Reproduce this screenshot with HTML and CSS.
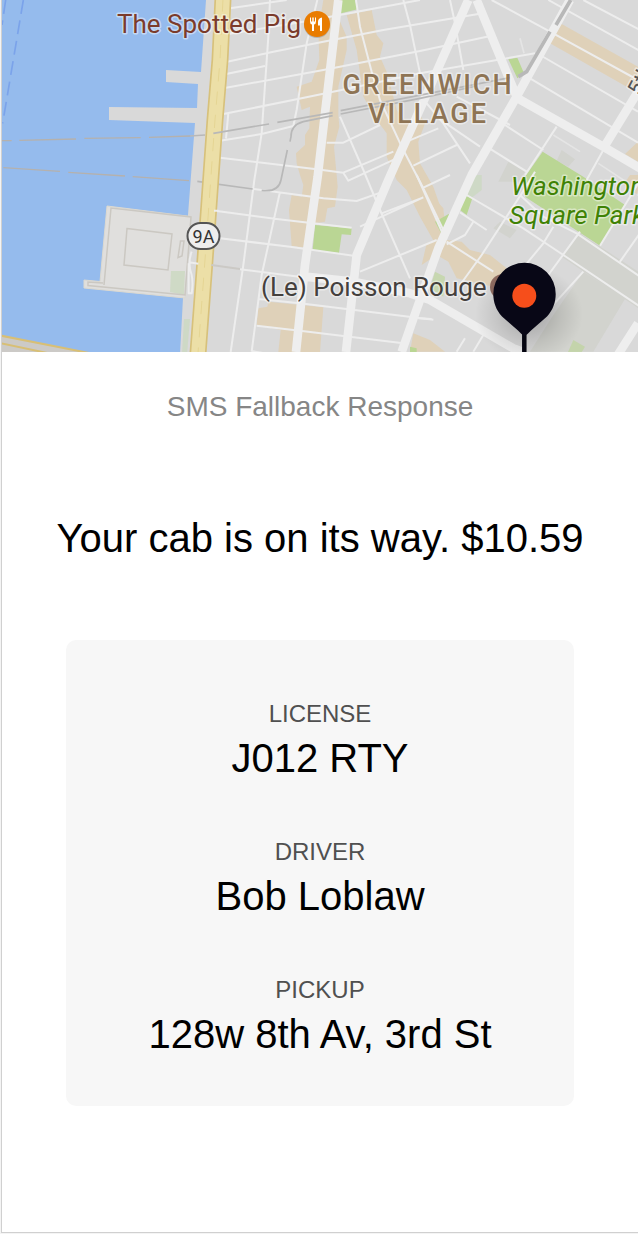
FILE: index.html
```html
<!DOCTYPE html>
<html lang="en">
<head>
<meta charset="utf-8">
<meta name="viewport" content="width=device-width, initial-scale=1">
<title>SMS Fallback Response</title>
<link rel="stylesheet" href="styles.css">
</head>
<body>
<main class="screen">
  <svg class="map" viewBox="2 0 636 352" role="img" aria-label="Map of Greenwich Village with the pickup point">
    <defs>
      <radialGradient id="shade"><stop offset="0.2" stop-color="#000" stop-opacity=".2"/><stop offset="0.6" stop-color="#000" stop-opacity=".09"/><stop offset="1" stop-color="#000" stop-opacity="0"/></radialGradient>
    </defs>
    <rect class="land" x="0" y="0" width="640" height="354"/>
    <!-- river and piers -->
    <path class="water" d="M0 0H206L201 72 166 70V82L198 84 197 108 109 107V120L195 123 188 215 183 298 180 354H0Z"/>
    <path class="shore" d="M0 335L94 354H0Z"/>
    <path class="gold-line" d="M0 335.500L94 354M0 343L52 354"/>
    <path class="pier" d="M107 206L191 216.500 185 298 84 288V280L100 281.500Z"/>
    <path class="grass-soft" d="M171 271H185L184 295 170 292Z"/>
    <path class="pier-line" d="M104 285L111 208 191 217 185 295 88 285.500V282L103 283M127 228.500L172 234 168 270 124 265ZM180.500 241H184L182 256 178 257.500Z"/>
    <path class="grass-soft" d="M184 319H190L187 354H182Z"/>

    <g transform="scale(.333333)">
      <g transform="translate(570 0)">
        <path class="shops" d="M400 0H455L448 60 470 110V150L445 260V345L448 380 432 440 440 525 443 560 435 620 412 625 405 665 372 670 362 745 305 738 297 630 305 585 335 590 340 555 330 525 320 490 318 460 345 435 345 405 358 385 360 320 335 330 320 260 365 245 388 180 385 90Z"/>
        <path class="shops" d="M470 45L545 30 560 105 580 130 570 170 592 220 620 330 650 370 690 345 705 370 685 425 690 490 730 560 765 660 735 730 690 650 650 570 620 540 590 470 590 400 560 360 520 290 500 150Z"/>
        <path class="shops" d="M235 905L400 922 390 1056H265L272 990 200 975 205 925 232 920Z"/>
        <path class="grass" d="M455 0H495L503 28 453 40ZM375 675L485 685 483 705 455 703 447 759 368 750Z"/>
      </g>
      <g transform="translate(1230 0)">
        <path class="shops" d="M455 72L684 200V270L650 260 420 130ZM700 410L645 462 684 485ZM700 510L665 540H700Z"/>
        <path class="campus" d="M295 485L345 515 325 545H265ZM455 450L495 478 475 500 440 482Z"/>
        <path class="grass" d="M295 178L322 173 342 220 322 235ZM398 455L345 530V590L570 737 645 615 520 530Z"/>
      </g>
      <g transform="translate(1230 525)">
        <path class="campus" d="M510 175L700 300V410L455 245ZM520 290L645 372 550 530H360L430 420ZM270 140L320 165 300 190 250 160Z"/>
        <path class="shops" d="M20 0L65 60 100 100 110 195 155 200 180 225 240 240 290 280 250 335 140 310 115 260 80 240 35 270 50 205 75 195 60 130 20 60ZM10 475L60 495 105 530H0ZM660 0H700V70L640 30Z"/>
        <path class="grass" d="M165 62L187 70 170 120 150 105ZM75 140L120 115 95 178ZM0 515L20 520V535H0Z"/>
        <path class="grass faded" d="M75 290L105 305 100 365 60 340ZM490 495L525 515 510 540H470Z"/>
        <path class="grass-soft" d="M195 0H215V45L185 68 165 50Z"/>
      </g>

      <!-- streets -->
      <g class="street">
        <path transform="translate(570 0)" d="M120 25L290 0M110 103L340 65 690 0M105 187L250 155 400 125 580 90 865 42M105 223L225 198M100 265L400 210 690 153 905 107M100 342L320 298 480 265 690 220 1035 160M90 422L215 402 310 378M115 340L108 415M90 473L380 508 460 518 475 542 620 475M460 518L610 455M240 0L235 110 215 400 193 540 160 795 122 1056M382 0L350 130 320 330 310 378"/>
        <path transform="translate(570 525)" d="M190 42L400 70 500 78 580 50M75 107L260 132 485 158M90 190L300 215 490 242M150 283L350 308M205 372L330 385 730 434M200 452L330 467 640 505M270 50L215 300 185 530M185 528L230 536"/>
        <!-- blocks between the two diagonal avenues -->
        <path transform="translate(840 0)" d="M228 0L240 80 275 215 300 300 365 440 430 565 495 700M370 0L390 75 420 220M140 428H190L300 375M180 350L250 510 300 630 390 835M380 425L475 385M400 497L530 435M430 563L510 525M305 640L430 592M240 680L430 592M240 815L470 720M440 310L490 370 570 490M490 365L600 440M530 290L690 375"/>
        <path transform="translate(1230 0)" d="M120 0L135 70 160 210M245 0L420 95 684 240M415 0L690 153M520 0L700 95M395 168L684 335M360 235L684 428M285 375L400 450M230 440L350 515M440 380L345 525M580 450L530 540"/>
        <path class="lane" transform="translate(1230 0)" d="M330 115L342 160M430 405L510 455M565 490L640 540"/>
        <path transform="translate(1230 525)" d="M170 60L340 160 460 240 690 395M330 60L400 125 500 175 690 305M110 200L250 290M150 330L215 240 345 40 375 -10M330 290L400 205 430 155M415 300L510 170M420 400L520 290M570 212L645 90 700 0M630 260L700 160M20 0L100 180M110 208L165 180 190 140M150 112L230 165M25 430L65 432M140 530L165 490M190 530L220 480"/>
      </g>
      <path class="avenue" d="M1015 0L975 340 953 530 915 795 888 1056M1405 0L1290 260 1165 540 1070 765 1038 1056M1430 0L1550 290M1710 0L1550 290 1415 525 1315 745 1235 970 1205 1056M1550 293L1810 440 1920 505M1920 265L1810 445M915 830L1060 845 1230 880 1290 900 1540 1045 1570 1056M1914 970L1850 1070"/>

      <!-- rail lines -->
      <g class="rail">
        <path transform="translate(570 0)" d="M0 408L45 405M262 367L428 338M428 347L340 365Q303 375 303 410M303 410L300 425M292 450L273 540Q265 578 215 571M452 332L960 233M452 342L690 295 860 258"/>
        <path d="M592 544L758 567"/>
        <path class="rail-wide" transform="translate(1230 0)" d="M325 230L350 215 420 95M438 75L482 0"/>
      </g>
      <path class="tunnel" d="M6 422H35M58 421L228 417M253 415L422 413M447 412L570 408M10 503L180 514M205 517L375 528M398 530L567 542"/>
      <path class="ferry" d="M70 0L8 370M17 0L6 75"/>

      <!-- West Side Highway -->
      <path class="highway-edge" d="M669 -5L660 180 645 360 633 528 615 780 594 1060"/>
      <path class="highway" d="M669 -5L660 180 645 360 633 528 615 780 594 1060"/>
      <path class="highway-mid" d="M669 -5L660 180 645 360 633 528 615 780 594 1060"/>
      <path class="rail" d="M640 400L807 372"/>
      <path class="street" d="M575 755Q562 790 575 825 580 850 575 880H566V790M567 787L595 791M642 632H656"/>
      <path class="tunnel-grey" d="M634 795L720 807"/>
    </g>

    <!-- route shield -->
    <rect class="shield" x="187.500" y="223" width="32" height="26" rx="13"/>
    <text class="shield-text" x="203.500" y="243">9A</text>

    <!-- place names -->
    <text class="label food" x="117" y="33">The Spotted Pig</text>
    <circle class="food-shadow" cx="317" cy="25" r="13"/>
    <circle class="food-dot" cx="317" cy="24" r="13"/>
    <path class="cutlery" d="M310 17.500V21.500Q310 24 312 24.500V31H314V24.500Q316 24 316 21.500V17.500H315V21.500H313.700V17.500H312.300V21.500H311V17.500ZM322 17.500Q318 18 318 22V25.500H320V31H322Z"/>
    <g class="label district">
      <text x="428" y="94">GREENWICH</text>
      <text x="428" y="123">VILLAGE</text>
    </g>
    <g class="label park">
      <text x="511" y="195">Washington</text>
      <text x="509" y="224">Square Park</text>
    </g>
    <text class="label road-name" transform="translate(640 97) rotate(-62)">5th</text>
    <circle class="venue-dot" cx="503" cy="287" r="13"/>
    <text class="label venue" x="261" y="296">(Le) Poisson Rouge</text>

    <!-- pickup pin -->
    <ellipse cx="529" cy="314" rx="54" ry="48" fill="url(#shade)"/>
    <path class="pin-stem" d="M524.300 330V354"/>
    <path class="pin" d="M524.500 336Q521 334 518 330.500L502 316.500C496 310 493.300 302 493.300 294A31.200 31.200 0 0 1 555.700 294C555.700 302 553 310 547 316.500L531 330.500Q528 334 524.500 336Z"/>
    <circle class="pin-dot" cx="524.300" cy="295.700" r="12"/>
  </svg>

  <section class="message">
    <h1 class="title">SMS Fallback Response</h1>
    <p class="status">Your cab is on its way. $10.59</p>
    <dl class="card">
      <div class="field"><dt>LICENSE</dt><dd>J012 RTY</dd></div>
      <div class="field"><dt>DRIVER</dt><dd>Bob Loblaw</dd></div>
      <div class="field"><dt>PICKUP</dt><dd>128w 8th Av, 3rd St</dd></div>
    </dl>
  </section>
</main>
</body>
</html>
```
FILE: styles.css
```css
* { box-sizing: border-box; }

body {
  margin: 0;
  border-left: 1px solid #f4f4f4;
  border-bottom: 1px solid #f4f4f4;
  background: #fff;
  color: #000;
  font-family: "Liberation Sans", Arial, sans-serif;
}

.screen {
  border-left: 1px solid #d0d0d0;
  border-bottom: 1px solid #d0d0d0;
}

.map { display: block; width: 100%; height: auto; }

.message {
  padding: 39px 64px 126px;
  text-align: center;
}

.title {
  margin: 0 0 91px;
  font-size: 28px;
  line-height: 32px;
  font-weight: 400;
  color: #868686;
}

.status {
  margin: 0 -32px 78px;
  font-size: 40px;
  line-height: 48px;
}

.card {
  display: flex;
  flex-direction: column;
  gap: 56px;
  margin: 0;
  padding: 60px 16px 48px;
  border-radius: 10px;
  background: #f7f7f7;
}

.field dt {
  margin-bottom: 6px;
  font-size: 24px;
  line-height: 28px;
  color: #505050;
}

.field dd {
  margin: 0;
  font-size: 40px;
  line-height: 48px;
}

/* map areas */
.land { fill: #d9d9d9; }
.water { fill: #95bbed; }
.shore { fill: #cccac7; }
.pier { fill: #e0dfdd; stroke: #dcd9d0; }
.pier-line { fill: none; stroke: #cbc8c2; stroke-width: 1.5; }
.shops { fill: #dfd1b9; }
.campus { fill: #d2d3ce; }
.grass { fill: #bad694; }
.faded { opacity: .6; }
.grass-soft { fill: #cbd8c1; opacity: .8; }

/* map lines, drawn at three units to the pixel */
.street { fill: none; stroke: #ededed; stroke-width: 6; stroke-linejoin: round; }
.lane { stroke-width: 5; stroke: #e5e5e5; }
.avenue { fill: none; stroke: #eee; stroke-width: 26; stroke-linejoin: round; }
.rail { fill: none; stroke: #b8b8b8; stroke-width: 5; }
.rail-wide { stroke-width: 11; }
.tunnel { fill: none; stroke: #b5b1ad; stroke-width: 4; }
.tunnel-grey { fill: none; stroke: #cbc9c5; stroke-width: 6; }
.ferry { fill: none; stroke: #7ba3ea; stroke-width: 5; stroke-dasharray: 42 20; }
.highway-edge { fill: none; stroke: #d7c17b; stroke-width: 51; }
.highway { fill: none; stroke: #ecdfa7; stroke-width: 41; }
.highway-mid { fill: none; stroke: #e5d594; stroke-width: 3; stroke-dasharray: 40 30; }
.gold-line { fill: none; stroke: #d8bf75; stroke-width: 2; }

/* map labels */
.label {
  font-family: Roboto, sans-serif;
  font-size: 26px;
  stroke: #fff;
  stroke-opacity: .45;
  stroke-width: 3px;
  stroke-linejoin: round;
  paint-order: stroke;
}
.food { fill: #7b3b2b; }
.food-shadow { fill: #999; opacity: .6; }
.food-dot { fill: #e97c00; }
.cutlery { fill: #fff; }
.district { fill: #8e7454; font-size: 27px; font-weight: 500; letter-spacing: 2px; text-anchor: middle; }
.park { fill: #3f8205; font-style: italic; }
.venue { fill: #44403d; }
.road-name { fill: #555; font-size: 22px; }
.venue-dot { fill: #8d6a60; }
.shield { fill: #eee; stroke: #555; stroke-width: 2; }
.shield-text { fill: #333; font-family: Roboto, sans-serif; font-size: 18px; text-anchor: middle; }
.pin { fill: #080716; }
.pin-stem { stroke: #050510; stroke-width: 4.500; }
.pin-dot { fill: #f64e1b; }
```
